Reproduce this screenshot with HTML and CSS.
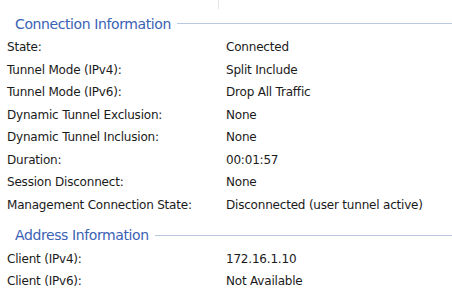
FILE: index.html
```html
<!DOCTYPE html>
<html lang="en">
<head>
    <meta charset="UTF-8">
    <title>Statistics</title>
    <link rel="stylesheet" href="styles.css">
</head>
<body>
    <div class="top-split"><div class="divider"></div></div>

    <div class="group">
        <div class="group-title"><span>Connection Information</span><div class="rule"></div></div>
        <div class="row"><span class="label">State:</span><span class="value">Connected</span></div>
        <div class="row"><span class="label">Tunnel Mode (IPv4):</span><span class="value">Split Include</span></div>
        <div class="row"><span class="label">Tunnel Mode (IPv6):</span><span class="value">Drop All Traffic</span></div>
        <div class="row"><span class="label">Dynamic Tunnel Exclusion:</span><span class="value">None</span></div>
        <div class="row"><span class="label">Dynamic Tunnel Inclusion:</span><span class="value">None</span></div>
        <div class="row"><span class="label">Duration:</span><span class="value">00:01:57</span></div>
        <div class="row"><span class="label">Session Disconnect:</span><span class="value">None</span></div>
        <div class="row"><span class="label">Management Connection State:</span><span class="value">Disconnected (user tunnel active)</span></div>
    </div>

    <div class="group">
        <div class="group-title"><span>Address Information</span><div class="rule"></div></div>
        <div class="row"><span class="label">Client (IPv4):</span><span class="value">172.16.1.10</span></div>
        <div class="row"><span class="label">Client (IPv6):</span><span class="value">Not Available</span></div>
    </div>
</body>
</html>
```

FILE: styles.css
```css
body {
    margin: 0;
    font-family: "DejaVu Sans", sans-serif;
    font-size: 12px;
    color: #1a1a1a;
    background: #ffffff;
}
.top-split {
    height: 11px;
    padding-left: 218px;
}
.divider {
    width: 1px;
    height: 9px;
    background: #e4e4e4;
}
.group {
    padding-bottom: 6.5px;
}
.group-title {
    display: flex;
    align-items: center;
    height: 25px;
    padding-left: 15px;
    font-size: 14px;
    letter-spacing: -0.4px;
    color: #3a62b4;
}
.rule {
    flex: 1;
    height: 1px;
    margin-left: 6px;
    background: #b9c8e4;
}
.row {
    display: flex;
    align-items: center;
    height: 22.5px;
    padding-left: 7px;
    letter-spacing: -0.2px;
}
.label {
    width: 219px;
}
```
